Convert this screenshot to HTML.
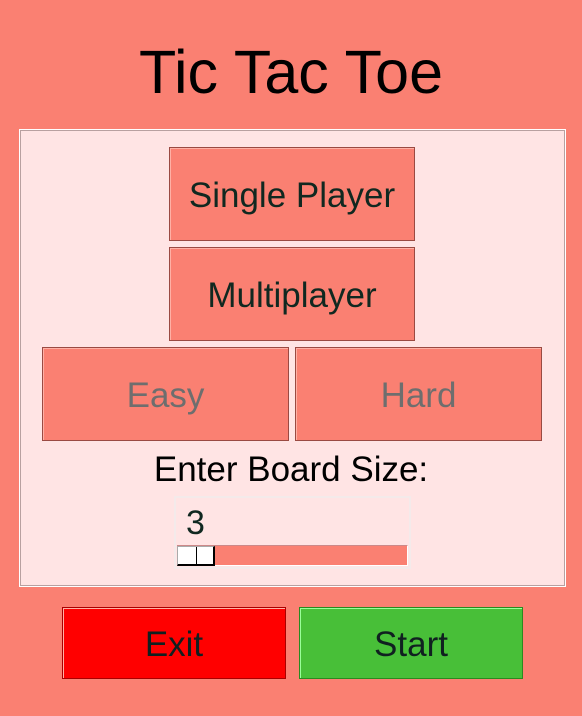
<!DOCTYPE html>
<html><head><style>
body{margin:0;width:582px;height:716px;background:#FA8072;position:relative;font-family:"Liberation Sans",sans-serif;overflow:hidden}
.a{position:absolute;box-sizing:border-box}
.t{left:0;width:582px;top:37px;text-align:center;font-size:61px;color:#000;line-height:70px}
.panel{left:19px;top:129px;width:547px;height:458px;background:#FFE4E4;border:1px solid #fff;box-shadow:inset 0 0 0 1px #b8a0a0}
.b{background:#FA8072;border:1px solid #9a4a42;box-shadow:inset 1px 1px 0 #ffb0a5;display:flex;align-items:center;justify-content:center;font-size:35px;color:#102820;padding-top:3px}
.d{color:#6e6e6e}
</style></head><body>
<div class="a t">Tic Tac Toe</div>
<div class="a panel"></div>
<div class="a b" style="left:169px;top:147px;width:246px;height:94px">Single Player</div>
<div class="a b" style="left:169px;top:247px;width:246px;height:94px">Multiplayer</div>
<div class="a b d" style="left:42px;top:347px;width:247px;height:94px">Easy</div>
<div class="a b d" style="left:295px;top:347px;width:247px;height:94px">Hard</div>
<div class="a" style="left:0;width:582px;top:450px;text-align:center;font-size:35px;color:#000;line-height:40px">Enter Board Size:</div>
<div class="a" style="left:174px;top:496px;width:237px;height:73px;border:2px solid #f4eaea"></div>
<div class="a" style="left:186px;top:504px;font-size:34px;line-height:38px;color:#102820">3</div>
<div class="a" style="left:177px;top:545px;width:231px;height:21px;background:#FA8072;border:1px solid #c88;border-bottom-color:#fff;border-right-color:#fff"></div>
<div class="a" style="left:177px;top:546px;width:38px;height:20px;background:#fff;border:1px solid #aaa;border-right:2px solid #000;border-bottom:2px solid #000"></div>
<div class="a" style="left:196px;top:547px;width:1px;height:17px;background:#000"></div>
<div class="a b" style="left:62px;top:607px;width:224px;height:72px;background:#FF0000;border-color:#a00;color:#102020">Exit</div>
<div class="a b" style="left:299px;top:607px;width:224px;height:72px;background:#48BF38;border-color:#2a8a20;box-shadow:inset 1px 1px 0 #9f9;color:#102020">Start</div>
</body></html>
